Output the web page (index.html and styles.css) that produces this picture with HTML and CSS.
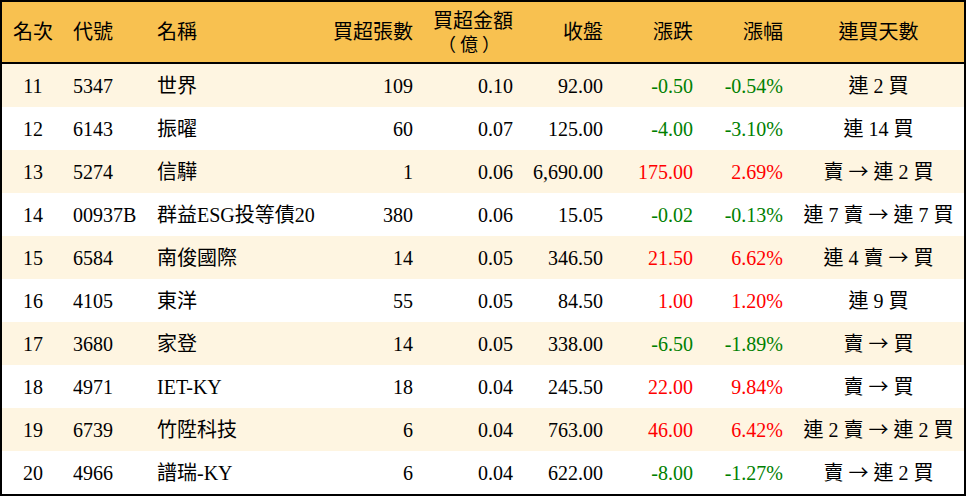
FILE: index.html
```html
<!DOCTYPE html>
<html lang="zh-Hant">
<head>
<meta charset="utf-8">
<title>買超排行</title>
<link rel="stylesheet" href="styles.css">
</head>
<body>
<div class="board">
  <div class="row head">
    <div class="c ctr">名次</div>
    <div class="c lft">代號</div>
    <div class="c lft nm">名稱</div>
    <div class="c rgt">買超張數</div>
    <div class="c rgt two"><span class="ln">買超金額</span><span class="ln unit">（億）</span></div>
    <div class="c rgt">收盤</div>
    <div class="c rgt">漲跌</div>
    <div class="c rgt">漲幅</div>
    <div class="c ctr">連買天數</div>
  </div>
  <div class="row odd">
    <div class="c ctr">11</div><div class="c lft">5347</div><div class="c lft nm">世界</div>
    <div class="c rgt">109</div><div class="c rgt">0.10</div><div class="c rgt">92.00</div>
    <div class="c rgt dn">-0.50</div><div class="c rgt dn">-0.54%</div><div class="c ctr">連 2 買</div>
  </div>
  <div class="row">
    <div class="c ctr">12</div><div class="c lft">6143</div><div class="c lft nm">振曜</div>
    <div class="c rgt">60</div><div class="c rgt">0.07</div><div class="c rgt">125.00</div>
    <div class="c rgt dn">-4.00</div><div class="c rgt dn">-3.10%</div><div class="c ctr">連 14 買</div>
  </div>
  <div class="row odd">
    <div class="c ctr">13</div><div class="c lft">5274</div><div class="c lft nm">信驊</div>
    <div class="c rgt">1</div><div class="c rgt">0.06</div><div class="c rgt">6,690.00</div>
    <div class="c rgt up">175.00</div><div class="c rgt up">2.69%</div><div class="c ctr">賣 <span class="ar">→</span> 連 2 買</div>
  </div>
  <div class="row">
    <div class="c ctr">14</div><div class="c lft">00937B</div><div class="c lft nm">群益ESG投等債20</div>
    <div class="c rgt">380</div><div class="c rgt">0.06</div><div class="c rgt">15.05</div>
    <div class="c rgt dn">-0.02</div><div class="c rgt dn">-0.13%</div><div class="c ctr">連 7 賣 <span class="ar">→</span> 連 7 買</div>
  </div>
  <div class="row odd">
    <div class="c ctr">15</div><div class="c lft">6584</div><div class="c lft nm">南俊國際</div>
    <div class="c rgt">14</div><div class="c rgt">0.05</div><div class="c rgt">346.50</div>
    <div class="c rgt up">21.50</div><div class="c rgt up">6.62%</div><div class="c ctr">連 4 賣 <span class="ar">→</span> 買</div>
  </div>
  <div class="row">
    <div class="c ctr">16</div><div class="c lft">4105</div><div class="c lft nm">東洋</div>
    <div class="c rgt">55</div><div class="c rgt">0.05</div><div class="c rgt">84.50</div>
    <div class="c rgt up">1.00</div><div class="c rgt up">1.20%</div><div class="c ctr">連 9 買</div>
  </div>
  <div class="row odd">
    <div class="c ctr">17</div><div class="c lft">3680</div><div class="c lft nm">家登</div>
    <div class="c rgt">14</div><div class="c rgt">0.05</div><div class="c rgt">338.00</div>
    <div class="c rgt dn">-6.50</div><div class="c rgt dn">-1.89%</div><div class="c ctr">賣 <span class="ar">→</span> 買</div>
  </div>
  <div class="row">
    <div class="c ctr">18</div><div class="c lft">4971</div><div class="c lft nm">IET-KY</div>
    <div class="c rgt">18</div><div class="c rgt">0.04</div><div class="c rgt">245.50</div>
    <div class="c rgt up">22.00</div><div class="c rgt up">9.84%</div><div class="c ctr">賣 <span class="ar">→</span> 買</div>
  </div>
  <div class="row odd">
    <div class="c ctr">19</div><div class="c lft">6739</div><div class="c lft nm">竹陞科技</div>
    <div class="c rgt">6</div><div class="c rgt">0.04</div><div class="c rgt">763.00</div>
    <div class="c rgt up">46.00</div><div class="c rgt up">6.42%</div><div class="c ctr">連 2 賣 <span class="ar">→</span> 連 2 買</div>
  </div>
  <div class="row">
    <div class="c ctr">20</div><div class="c lft">4966</div><div class="c lft nm">譜瑞-KY</div>
    <div class="c rgt">6</div><div class="c rgt">0.04</div><div class="c rgt">622.00</div>
    <div class="c rgt dn">-8.00</div><div class="c rgt dn">-1.27%</div><div class="c ctr">賣 <span class="ar">→</span> 連 2 買</div>
  </div>
</div>
</body>
</html>
```
FILE: styles.css
```css
html, body {
  margin: 0;
  padding: 0;
  background: #ffffff;
}
.board {
  width: 962px;
  border: 2px solid #000;
  font-family: "Liberation Serif", "Noto Sans CJK TC", serif;
  font-size: 20px;
  color: #000;
  background: #fff;
}
.row {
  display: grid;
  grid-template-columns: 62px 83px 183px 93px 100px 90px 90px 90px 171px;
  height: 43px;
  align-items: center;
  background: #ffffff;
}
.row.odd {
  background: #fef5e1;
}
.row.head {
  height: 60px;
  background: #f8c150;
  border-bottom: 2px solid #000;
}
.c {
  white-space: nowrap;
  line-height: 22px;
}
.ctr {
  text-align: center;
}
.lft {
  text-align: left;
  padding-left: 9px;
}
.lft.nm {
  padding-left: 10px;
}
.rgt {
  text-align: right;
  padding-right: 10px;
}
.two {
  display: flex;
  flex-direction: column;
  align-items: flex-end;
}
.ln {
  display: block;
  line-height: 22px;
  height: 22px;
}
.unit {
  margin-right: 9px;
  letter-spacing: 4px;
  font-family: "Noto Sans CJK TC", sans-serif;
  font-size: 18px;
}
.ar {
  font-family: "Noto Sans CJK TC", sans-serif;
}
.up {
  color: #ff0000;
}
.dn {
  color: #008000;
}
```
